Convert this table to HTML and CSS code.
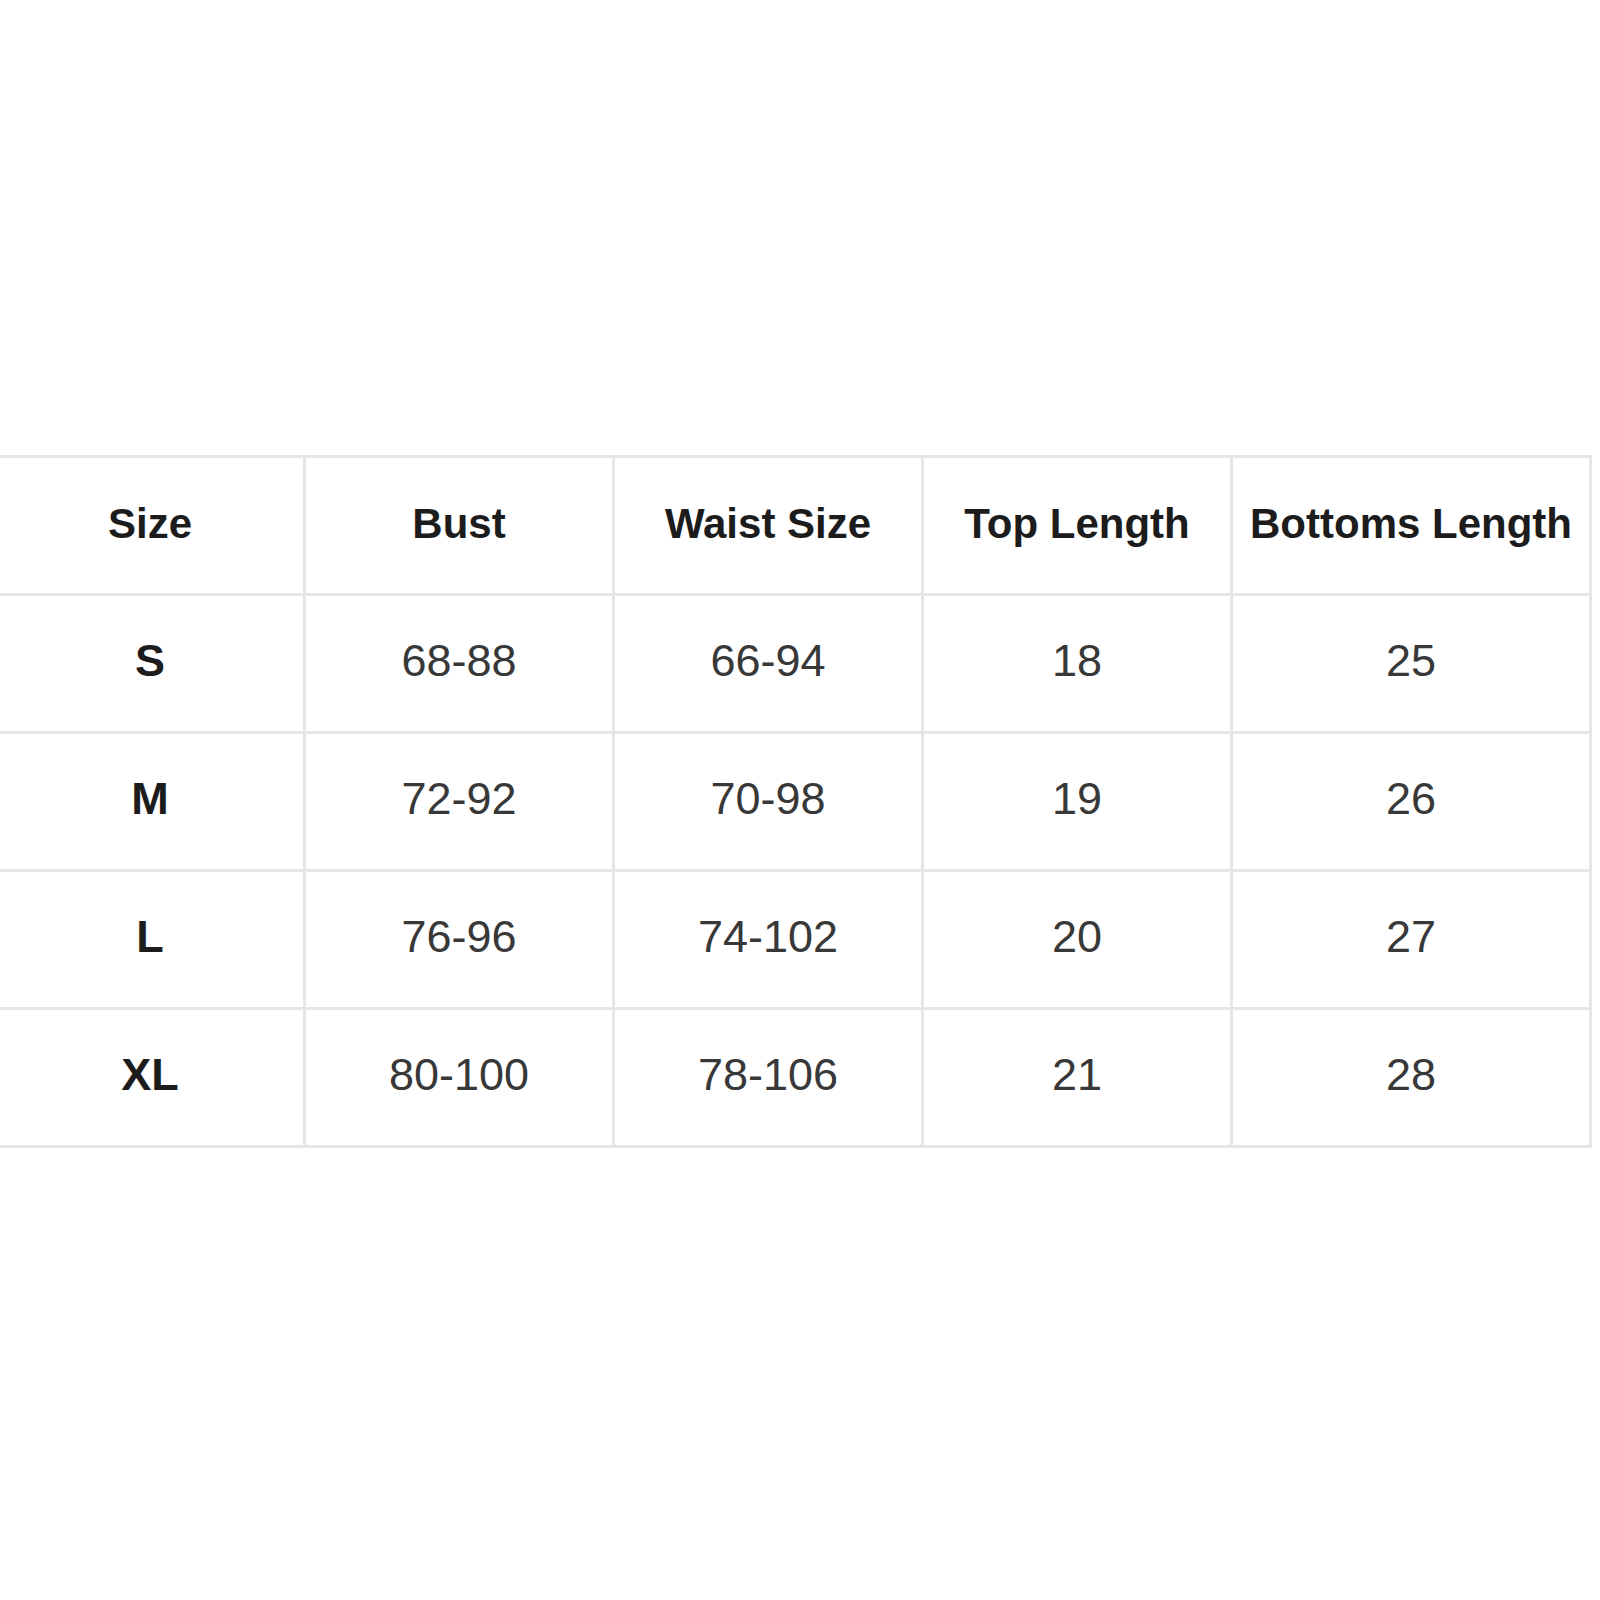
FILE: index.html
```html
<!DOCTYPE html>
<html>
<head>
<meta charset="utf-8">
<link rel="stylesheet" href="styles.css">
</head>
<body>
<div class="page">
  <div class="chart">
    <div class="cell head">Size</div>
    <div class="cell head">Bust</div>
    <div class="cell head">Waist Size</div>
    <div class="cell head">Top Length</div>
    <div class="cell head">Bottoms Length</div>

    <div class="cell label">S</div>
    <div class="cell">68-88</div>
    <div class="cell">66-94</div>
    <div class="cell">18</div>
    <div class="cell">25</div>

    <div class="cell label">M</div>
    <div class="cell">72-92</div>
    <div class="cell">70-98</div>
    <div class="cell">19</div>
    <div class="cell">26</div>

    <div class="cell label">L</div>
    <div class="cell">76-96</div>
    <div class="cell">74-102</div>
    <div class="cell">20</div>
    <div class="cell">27</div>

    <div class="cell label">XL</div>
    <div class="cell">80-100</div>
    <div class="cell">78-106</div>
    <div class="cell">21</div>
    <div class="cell">28</div>
  </div>
</div>
</body>
</html>
```

FILE: styles.css
```css
html, body {
  margin: 0;
  padding: 0;
  background: #ffffff;
}
.page {
  width: 1600px;
  height: 1600px;
  padding-top: 455px;
  box-sizing: border-box;
  overflow: hidden;
}
.chart {
  margin-left: -6px;
  display: grid;
  grid-template-columns: 306px 306px 306px 306px 356px;
  grid-auto-rows: 135px;
  gap: 3px;
  padding: 3px;
  background: #e6e6e6;
  width: max-content;
}
.cell {
  background: #ffffff;
  display: flex;
  align-items: center;
  justify-content: center;
  font-family: "Liberation Sans", Arial, sans-serif;
  font-size: 45px;
  color: #383838;
  padding-bottom: 5px;
  box-sizing: border-box;
}
.head {
  font-weight: bold;
  font-size: 42px;
  color: #1c1c1c;
  padding-bottom: 4px;
}
.label {
  font-weight: bold;
  color: #1c1c1c;
}
```
